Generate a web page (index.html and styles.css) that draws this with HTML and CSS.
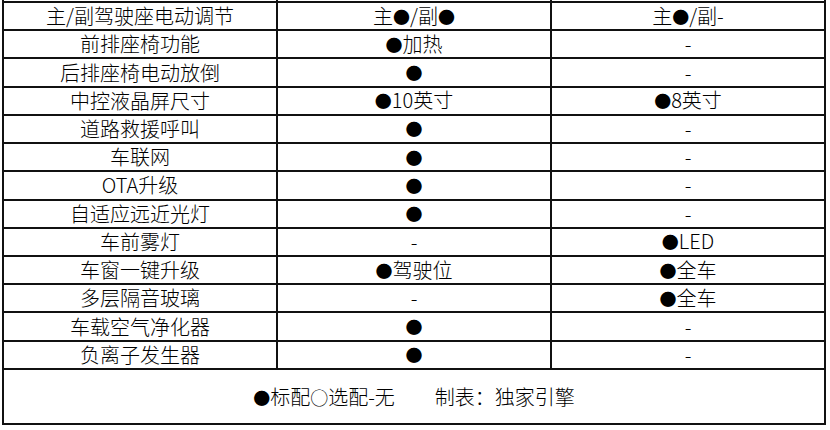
FILE: index.html
```html
<!DOCTYPE html>
<html lang="zh-CN">
<head>
<meta charset="utf-8">
<title>配置表</title>
<link rel="stylesheet" href="styles.css">
</head>
<body>
<table class="sheet">
  <colgroup><col class="c"><col class="c"><col class="c"></colgroup>
  <tr class="cut"><td></td><td></td><td></td></tr>
  <tr><td>主/副驾驶座电动调节</td><td>主<span class="dot">●</span>/副<span class="dot">●</span></td><td>主<span class="dot">●</span>/副-</td></tr>
  <tr><td>前排座椅功能</td><td><span class="dot">●</span>加热</td><td>-</td></tr>
  <tr><td>后排座椅电动放倒</td><td><span class="dot">●</span></td><td>-</td></tr>
  <tr><td>中控液晶屏尺寸</td><td><span class="dot">●</span>10英寸</td><td><span class="dot">●</span>8英寸</td></tr>
  <tr><td>道路救援呼叫</td><td><span class="dot">●</span></td><td>-</td></tr>
  <tr><td>车联网</td><td><span class="dot">●</span></td><td>-</td></tr>
  <tr><td>OTA升级</td><td><span class="dot">●</span></td><td>-</td></tr>
  <tr><td>自适应远近光灯</td><td><span class="dot">●</span></td><td>-</td></tr>
  <tr><td>车前雾灯</td><td>-</td><td><span class="dot">●</span>LED</td></tr>
  <tr><td>车窗一键升级</td><td><span class="dot">●</span>驾驶位</td><td><span class="dot">●</span>全车</td></tr>
  <tr><td>多层隔音玻璃</td><td>-</td><td><span class="dot">●</span>全车</td></tr>
  <tr><td>车载空气净化器</td><td><span class="dot">●</span></td><td>-</td></tr>
  <tr><td>负离子发生器</td><td><span class="dot">●</span></td><td>-</td></tr>
  <tr class="foot"><td colspan="3"><span class="dot">●</span>标配<span class="ring">○</span>选配-无　　制表：独家引擎</td></tr>
</table>
</body>
</html>
```

FILE: styles.css
```css
html, body {
  margin: 0;
  padding: 0;
  background: #ffffff;
}
body {
  font-family: "Noto Sans CJK SC", "Noto Sans", sans-serif;
  font-size: 20px;
  font-weight: 300;
  color: #000000;
}
.sheet {
  border-collapse: collapse;
  table-layout: fixed;
  width: 823px;
  margin-left: 2px;
}
.sheet .c {
  width: 274px;
}
.sheet td {
  border: 2px solid #111111;
  padding: 0;
  height: 26.23px;
  line-height: 20px;
  text-align: center;
  vertical-align: middle;
  white-space: nowrap;
  overflow: hidden;
}
.sheet .cut td {
  border-top: none;
  height: 1px;
  line-height: 0;
}
.sheet .foot td {
  height: 51px;
  padding-top: 2px;
}
.dot {
  font-size: 17px;
}
.ring {
  font-size: 18px;
}
```
